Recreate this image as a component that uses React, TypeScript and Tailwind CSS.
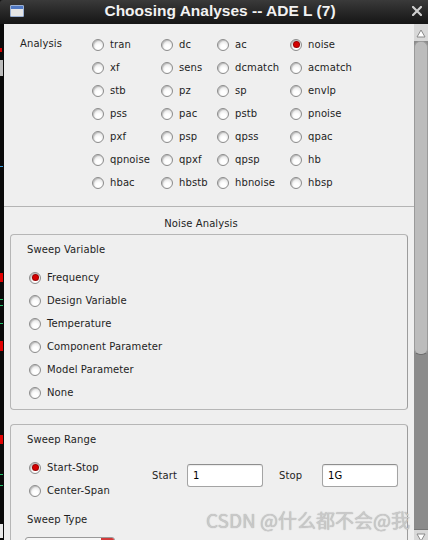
import React from "react";

const rows = [
  ["tran", "dc", "ac", "noise"],
  ["xf", "sens", "dcmatch", "acmatch"],
  ["stb", "pz", "sp", "envlp"],
  ["pss", "pac", "pstb", "pnoise"],
  ["pxf", "psp", "qpss", "qpac"],
  ["qpnoise", "qpxf", "qpsp", "hb"],
  ["hbac", "hbstb", "hbnoise", "hbsp"],
];

const sweepVars = [
  "Frequency",
  "Design Variable",
  "Temperature",
  "Component Parameter",
  "Model Parameter",
  "None",
];

function Radio({ checked = false }: { checked?: boolean }) {
  return (
    <span className="flex h-[12px] w-[12px] shrink-0 items-center justify-center rounded-full border border-[#8c8c8c] bg-[radial-gradient(circle_at_55%_70%,#ffffff_25%,#d4d4d4_100%)] shadow-[inset_1px_1px_1px_rgba(0,0,0,0.18)]">
      {checked && (
        <span className="h-[5px] w-[5px] rounded-full bg-[#d60000] shadow-[0_0_0_1px_#9a0000]" />
      )}
    </span>
  );
}

function RadioItem({ label, checked = false }: { label: string; checked?: boolean }) {
  return (
    <div className="flex h-[23px] items-center gap-[6px]">
      <Radio checked={checked} />
      <span className="leading-none">{label}</span>
    </div>
  );
}

function TextBox({ value }: { value: string }) {
  return (
    <div className="flex h-[23px] w-[76px] items-center rounded-[3px] border border-[#a4a4a4] border-t-[#8e8e8e] bg-white pl-[5px] text-black shadow-[inset_0_1px_1px_rgba(0,0,0,0.08)]">
      {value}
    </div>
  );
}

export default function App() {
  return (
    <div className="relative flex h-[540px] w-[428px] flex-col overflow-hidden bg-[#111] font-['DejaVu_Sans',sans-serif] text-[10px] tracking-[0.1px] text-[#1e1e1e]">
      {/* title bar */}
      <div className="flex h-[24px] shrink-0 items-center rounded-tl-[3px] bg-linear-to-b from-[#3a3a3a] to-[#161616] pb-[2px]">
        <div className="ml-[10px] flex h-[12px] w-[14px] flex-col overflow-hidden rounded-[1px] border border-[#9ab0d4] bg-[#e6e6e6]">
          <div className="h-[3px] bg-[#4f78c4]" />
        </div>
        <div className="flex-1 pl-[4px] text-center font-['Liberation_Sans',sans-serif] text-[15.5px] font-bold leading-[22px] tracking-normal text-[#f2f2f2]">
          Choosing Analyses -- ADE L (7)
        </div>
        <svg width="10" height="10" viewBox="0 0 10 10" className="mr-[6px]">
          <path d="M1 1 L9 9 M9 1 L1 9" stroke="#cfcfcf" strokeWidth="2.2" strokeLinecap="square" />
        </svg>
      </div>

      <div className="flex flex-1">
        {/* desktop strip behind the window */}
        <div className="flex w-[4px] shrink-0 flex-col bg-[#0a0a0a]">
          <div className="mt-[24px] h-[4px] w-[2px] bg-[#d00000]" />
          <div className="mt-[8px] h-[16px] w-[3px] bg-[#bdbdbd]" />
          <div className="mt-[90px] h-[1px] w-[3px] bg-[#3aa0e0]" />
          <div className="mt-[106px] h-[9px] w-[3px] bg-[#e00000]" />
          <div className="mt-[17px] h-[1px] w-[3px] bg-[#22c06a]" />
          <div className="mt-[5px] h-[1px] w-[3px] bg-[#22c06a]" />
          <div className="mt-[17px] h-[1px] w-[3px] bg-[#22c06a]" />
          <div className="mt-[17px] h-[10px] w-[3px] bg-[#e00000]" />
          <div className="mt-[84px] h-[9px] w-[3px] bg-[#e00000]" />
          <div className="mt-[30px] h-[1px] w-[3px] bg-[#22c06a]" />
          <div className="mt-[10px] h-[1px] w-[3px] bg-[#22c06a]" />
          <div className="mt-[38px] h-[14px] w-[3px] bg-[#eaeaea]" />
        </div>

        {/* dialog body */}
        <div className="flex w-[410px] shrink-0 flex-col bg-[#efefef]">
          <div className="flex pl-[16px] pt-[9px]">
            <div className="w-[72px] pt-[4px] leading-[14px]">Analysis</div>
            <div className="grid grid-cols-[69px_56px_73px_1fr]">
              {rows.flat().map((name) => (
                <RadioItem key={name} label={name} checked={name === "noise"} />
              ))}
            </div>
          </div>

          <div className="mt-[12px] h-[1px] bg-[#b4b4b4]" />

          <div className="mt-[10px] h-[14px] pr-[16px] text-center leading-[14px]">Noise Analysis</div>

          {/* Sweep Variable */}
          <div className="ml-[6px] mt-[3px] w-[398px] rounded-[4px] border border-[#b6b6b6] border-r-[#9c9c9c] pb-[5px] pt-[3px]">
            <div className="ml-[16px] flex h-[22px] items-center">Sweep Variable</div>
            <div className="ml-[18px] mt-[6px] flex flex-col">
              {sweepVars.map((v, i) => (
                <RadioItem key={v} label={v} checked={i === 0} />
              ))}
            </div>
          </div>

          {/* Sweep Range */}
          <div className="ml-[6px] mt-[14px] w-[398px] flex-1 rounded-t-[4px] border border-b-0 border-[#b6b6b6] border-r-[#9c9c9c] pt-[3px]">
            <div className="ml-[16px] flex h-[22px] items-center">Sweep Range</div>
            <div className="mt-[6px] flex">
              <div className="ml-[18px] flex w-[123px] flex-col">
                <RadioItem label="Start-Stop" checked />
                <RadioItem label="Center-Span" />
              </div>
              <div className="mt-[8px] flex h-[23px] items-center">
                <span className="w-[35px]">Start</span>
                <TextBox value="1" />
                <span className="ml-[16px] w-[43px]">Stop</span>
                <TextBox value="1G" />
              </div>
            </div>
            <div className="ml-[16px] mt-[6px] flex h-[22px] items-center">Sweep Type</div>
            <div className="ml-[14px] mt-[7px] flex h-[12px] w-[90px] overflow-hidden rounded-t-[3px] border border-[#9a9a9a] bg-[#f7f7f7]">
              <div className="flex-1" />
              <div className="w-[13px] bg-[#d23a3a]" />
            </div>
          </div>
        </div>

        {/* scrollbar */}
        <div className="flex w-[14px] shrink-0 flex-col bg-[#8b8b8b]">
          <div className="flex h-[17px] items-end justify-center bg-[#d8d8d8] pb-[3px]">
            <svg width="10" height="9" viewBox="0 0 10 9">
              <path d="M5 1 L9 8 L1 8 Z" fill="#ffffff" stroke="#8a8a8a" strokeWidth="1" />
            </svg>
          </div>
          <div className="h-[314px] rounded-[6px] border border-[#9a9a9a] border-b-[#6e6e6e] bg-[#bcbcbc]" />
          <div className="flex-1" />
          <div className="flex h-[20px] items-start justify-center border-t border-[#777] bg-[#d8d8d8] pt-[3px]">
            <svg width="10" height="9" viewBox="0 0 10 9">
              <path d="M1 1 L9 1 L5 8 Z" fill="#ffffff" stroke="#8a8a8a" strokeWidth="1" />
            </svg>
          </div>
        </div>
      </div>

      {/* blog watermark over the screenshot */}
      <div className="pointer-events-none absolute left-[206px] top-[506px] whitespace-nowrap font-['Noto_Sans_CJK_SC','Noto_Sans',sans-serif] text-[19px] leading-[28px] tracking-normal text-[#c9c9c9] [text-shadow:0_0_1px_rgba(120,120,120,0.6)]">
        CSDN @什么都不会@我
      </div>
    </div>
  );
}
